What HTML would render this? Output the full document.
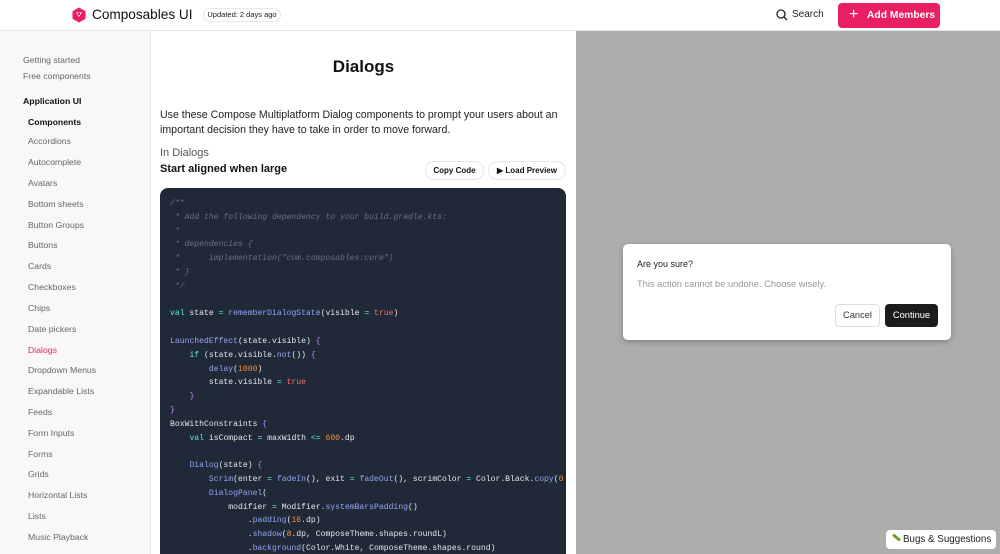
<!DOCTYPE html>
<html><head><meta charset="utf-8"><style>
*{box-sizing:border-box;margin:0;padding:0}
html,body{width:1000px;height:554px;overflow:hidden}
body{font-family:"Liberation Sans",sans-serif;background:#fff;position:relative;color:#111}
.hdr{position:absolute;left:0;top:0;width:1000px;height:31px;border-bottom:1px solid #e5e7eb;background:#fff}
.side{position:absolute;left:0;top:31px;width:151px;height:523px;background:#f8f8f9;border-right:1px solid #e5e7eb}
.side div{position:absolute;font-size:8.7px;color:#666;white-space:nowrap}
.main{position:absolute;left:151px;top:31px;width:425px;height:523px;background:#fff}
.right{position:absolute;left:576px;top:31px;width:424px;height:523px;background:#adadad}
.code{position:absolute;left:160px;top:188px;width:406px;height:366px;background:#1f2937;border-radius:8px 8px 0 0;overflow:hidden}
.code pre{position:absolute;left:10px;top:9px;font-family:"Liberation Mono",monospace;font-size:8.1px;line-height:13.8px;color:#e5e7eb}
.c{color:#6b7280;font-style:italic}.k{color:#5eead4}.f{color:#93a5f5}.t{color:#f87171}.n{color:#fb923c}.p{color:#c084fc}
.btn{position:absolute;top:161px;height:19px;border:1px solid #e5e7eb;border-radius:9px;font-size:8px;font-weight:bold;line-height:17px;text-align:center}
</style></head><body>
<div class="hdr">
<svg style="position:absolute;left:71px;top:7px" width="16" height="16" viewBox="0 0 16 16"><path d="M8 0.5L14.5 4.2V11.8L8 15.5L1.5 11.8V4.2Z" fill="#e91e63"/><path d="M5 5.5H11L8 10Z" fill="#fff"/><circle cx="8" cy="7" r="1.3" fill="#e91e63"/></svg>
<div style="position:absolute;left:92px;top:7px;font-size:13.6px;color:#111">Composables UI</div>
<div style="position:absolute;left:203px;top:8px;height:14px;width:78px;border:1px solid #e5e7eb;border-radius:7px;font-size:7.5px;line-height:12px;text-align:center;color:#222">Updated: 2 days ago</div>
<svg style="position:absolute;left:776px;top:9px" width="12" height="12" viewBox="0 0 12 12"><circle cx="5" cy="5" r="4" fill="none" stroke="#222" stroke-width="1.3"/><path d="M8 8L11 11" stroke="#222" stroke-width="1.3"/></svg>
<div style="position:absolute;left:792px;top:9px;font-size:10px;color:#222">Search</div>
<div style="position:absolute;left:838px;top:3px;width:102px;height:25px;background:#e91e63;border-radius:4px;color:#fff;font-size:10.3px;font-weight:bold;line-height:25px;padding-left:29px">Add Members</div>
<div style="position:absolute;left:849px;top:8px;color:#fff;font-size:16px;line-height:14px">+</div>
</div>
<div class="side">
<div style="left:23px;top:24px">Getting started</div>
<div style="left:23px;top:40px">Free components</div>
<div style="left:23px;top:65px;color:#111;font-weight:bold">Application UI</div>
<div style="left:28px;top:86px;color:#111;font-weight:bold">Components</div>
<div style="left:28px;top:105px">Accordions</div>
<div style="left:28px;top:126px">Autocomplete</div>
<div style="left:28px;top:147px">Avatars</div>
<div style="left:28px;top:168px">Bottom sheets</div>
<div style="left:28px;top:189px">Button Groups</div>
<div style="left:28px;top:209px">Buttons</div>
<div style="left:28px;top:230px">Cards</div>
<div style="left:28px;top:251px">Checkboxes</div>
<div style="left:28px;top:272px">Chips</div>
<div style="left:28px;top:293px">Date pickers</div>
<div style="left:28px;top:314px;color:#e91e63">Dialogs</div>
<div style="left:28px;top:334px">Dropdown Menus</div>
<div style="left:28px;top:355px">Expandable Lists</div>
<div style="left:28px;top:376px">Feeds</div>
<div style="left:28px;top:397px">Form Inputs</div>
<div style="left:28px;top:418px">Forms</div>
<div style="left:28px;top:438px">Grids</div>
<div style="left:28px;top:459px">Horizontal Lists</div>
<div style="left:28px;top:480px">Lists</div>
<div style="left:28px;top:501px">Music Playback</div>
</div>
<div class="main">
<div style="position:absolute;left:0;width:425px;top:26px;text-align:center;font-size:17px;font-weight:bold">Dialogs</div>
<div style="position:absolute;left:9px;top:77px;width:410px;font-size:10.6px;line-height:14.5px;color:#222">Use these Compose Multiplatform Dialog components to prompt your users about an important decision they have to take in order to move forward.</div>
<div style="position:absolute;left:9px;top:116px;font-size:11px;color:#555">In Dialogs</div>
<div style="position:absolute;left:9px;top:132px;font-size:11px;color:#111;font-weight:bold">Start aligned when large</div>
</div>
<div class="btn" style="left:425px;width:59px">Copy Code</div>
<div class="btn" style="left:488px;width:78px">▶ Load Preview</div>
<div class="code"><pre><span class="c">/**
 * Add the following dependency to your build.gradle.kts:
 *
 * dependencies {
 *      implementation("com.composables:core")
 * }
 */</span>

<span class="k">val</span> state <span class="k">=</span> <span class="f">rememberDialogState</span>(visible <span class="k">=</span> <span class="t">true</span>)

<span class="f">LaunchedEffect</span>(state.visible) <span class="p">{</span>
    <span class="k">if</span> (state.visible.<span class="f">not</span>()) <span class="p">{</span>
        <span class="f">delay</span>(<span class="n">1000</span>)
        state.visible <span class="k">=</span> <span class="t">true</span>
    <span class="p">}</span>
<span class="p">}</span>
BoxWithConstraints <span class="p">{</span>
    <span class="k">val</span> isCompact <span class="k">=</span> maxWidth <span class="k">&lt;=</span> <span class="n">600</span>.dp

    <span class="f">Dialog</span>(state) <span class="p">{</span>
        <span class="f">Scrim</span>(enter <span class="k">=</span> <span class="f">fadeIn</span>(), exit <span class="k">=</span> <span class="f">fadeOut</span>(), scrimColor <span class="k">=</span> Color.Black.<span class="f">copy</span>(<span class="n">0</span>
        <span class="f">DialogPanel</span>(
            modifier <span class="k">=</span> Modifier.<span class="f">systemBarsPadding</span>()
                .<span class="f">padding</span>(<span class="n">16</span>.dp)
                .<span class="f">shadow</span>(<span class="n">8</span>.dp, ComposeTheme.shapes.roundL)
                .<span class="f">background</span>(Color.White, ComposeTheme.shapes.round)</pre></div>
<div class="right"></div>
<div style="position:absolute;left:623px;top:244px;width:328px;height:96px;background:#fff;border-radius:5px;box-shadow:0 2px 6px rgba(0,0,0,.25)">
<div style="position:absolute;left:14px;top:15px;font-size:9px;color:#222">Are you sure?</div>
<div style="position:absolute;left:14px;top:35px;font-size:9.3px;color:#999">This action cannot be undone. Choose wisely.</div>
<div style="position:absolute;left:212px;top:60px;width:45px;height:23px;border:1px solid #ddd;border-radius:4px;font-size:9.3px;line-height:21px;text-align:center;color:#333">Cancel</div>
<div style="position:absolute;left:262px;top:60px;width:53px;height:23px;background:#1c1c1c;border-radius:4px;font-size:9.3px;line-height:23px;text-align:center;color:#fff">Continue</div>
</div>
<div style="position:absolute;left:886px;top:530px;width:110px;height:19px;background:#fff;border-radius:4px;font-size:9.8px;line-height:19px;padding-left:17px;color:#222">Bugs &amp; Suggestions</div>
<div style="position:absolute;left:892px;top:536px;width:9px;height:3px;background:#6a9f2a;transform:rotate(40deg)"></div>
</body></html>
